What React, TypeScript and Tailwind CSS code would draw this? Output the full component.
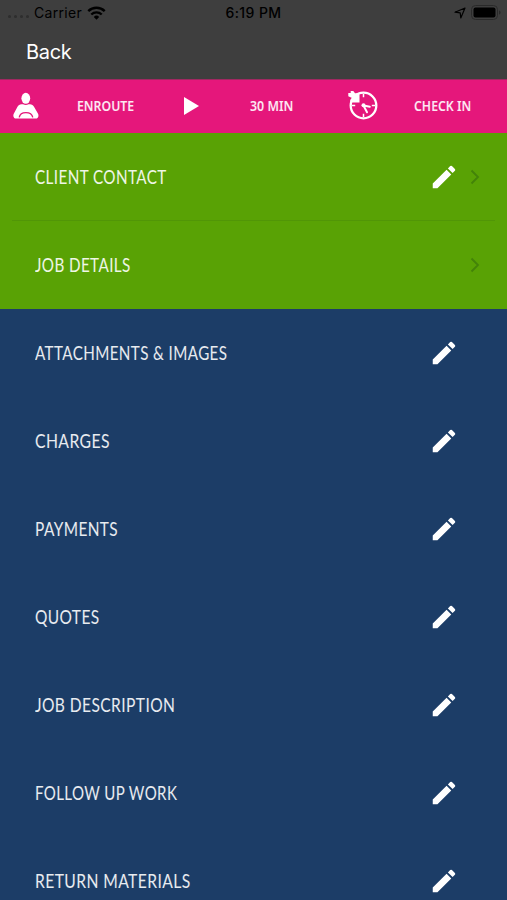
import { MdEdit } from "react-icons/md";

interface MenuItem {
  label: string;
  // horizontal condensing for the label face
  fit: string;
  editable?: boolean;
}

const clientItems: MenuItem[] = [
  { label: "CLIENT CONTACT", fit: "scale-x-[0.802]", editable: true },
  { label: "JOB DETAILS", fit: "scale-x-[0.801]" },
];

const jobItems: MenuItem[] = [
  { label: "ATTACHMENTS & IMAGES", fit: "scale-x-[0.799]" },
  { label: "CHARGES", fit: "scale-x-[0.828]" },
  { label: "PAYMENTS", fit: "scale-x-[0.811]" },
  { label: "QUOTES", fit: "scale-x-[0.814]" },
  { label: "JOB DESCRIPTION", fit: "scale-x-[0.82]" },
  { label: "FOLLOW UP WORK", fit: "scale-x-[0.792]" },
  { label: "RETURN MATERIALS", fit: "scale-x-[0.824]" },
];

function StatusBar() {
  return (
    <div className="grid h-[26px] grid-cols-3 items-center pb-px text-[13.5px] text-black">
      <div className="flex items-center pl-2">
        <div className="mt-2 flex w-[26px] gap-[3px]">
          <span className="size-[3px] rounded-full bg-[#2e2e2e]" />
          <span className="size-[3px] rounded-full bg-[#2e2e2e]" />
          <span className="size-[3px] rounded-full bg-[#2e2e2e]" />
          <span className="size-[3px] rounded-full bg-[#2e2e2e]" />
        </div>
        <span className="text-[14px] tracking-[0.3px]">Carrier</span>
        <svg className="ml-[5px]" width="19" height="14" viewBox="0 0 19 14" fill="none" stroke="#000">
          <path d="M1.3 5.2a11.7 11.7 0 0 1 16.4 0" strokeWidth="2.5" />
          <path d="M4.3 8.5a7.4 7.4 0 0 1 10.4 0" strokeWidth="2.3" />
          <path d="M9.5 13.7l-2.7-2.8a3.8 3.8 0 0 1 5.4 0z" fill="#000" stroke="none" />
        </svg>
      </div>
      <span className="text-center text-[14px] font-medium tracking-[0.4px]">6:19 PM</span>
      <div className="flex items-center justify-end pr-[6px]">
        <svg width="12" height="12" viewBox="0 0 12 12" fill="none" stroke="#000" strokeWidth="1.2" strokeLinejoin="round">
          <path d="M11 1L6.8 11 6.2 5.8 1 5.2z" />
        </svg>
        <svg className="ml-[5px]" width="30" height="15" viewBox="0 0 30 15">
          <rect x="0.5" y="0.5" width="26" height="14" rx="4" fill="none" stroke="#2a2a2a" />
          <rect x="2.5" y="2.5" width="22" height="10" rx="2" fill="#000" />
          <path d="M28 5.5v4c1-.3 1.5-1 1.5-2s-.5-1.7-1.5-2z" fill="#2a2a2a" />
        </svg>
      </div>
    </div>
  );
}

function DriverIcon() {
  return (
    <svg width="26" height="28" viewBox="0 0 26 28" fill="#fff">
      <ellipse cx="12.8" cy="6.3" rx="4.4" ry="5.5" />
      <path d="M8.5 12.3h1.5c1.8 1 3.8 1 5.6 0h1.4c1.8 0 3.2.9 4 2.4l3.9 6.9c1.3 2.5.3 5-2.3 5H3.200C.6 26.600-.4 24.100.9 21.600l3.600-6.900c.8-1.500 2.200-2.400 4-2.400z" />
      <path d="M6.200 25.400c.6-3.400 3.200-4.800 6.700-4.800s6.200 1.400 6.900 4.800" fill="none" stroke="#e5177b" strokeWidth="1.300" />
    </svg>
  );
}

function CheckInIcon() {
  return (
    <svg className="relative -top-px" width="30" height="30" viewBox="0 0 30 30" fill="none" stroke="#fff">
      <circle cx="15.5" cy="15.5" r="12.8" strokeWidth="2.3" />
      <path d="M15.5 4v3.2M15.5 23.8V27M4 15.5h3.2M23.8 15.5H27" strokeWidth="1.5" />
      <path d="M15.5 15.5l6.3 1.2M15.5 15.5l3.5 6.8" strokeWidth="2" strokeLinecap="round" />
      <circle cx="15.5" cy="15.3" r="2" fill="#fff" stroke="none" />
      <path d="M11.5 3.2v9.3H2.3V9.7L4 8 .3 6.2V3h2.4V1h2.6L7 3.2z" fill="#fff" stroke="none" />
    </svg>
  );
}

function ChevronIcon() {
  return (
    <svg width="10" height="16" viewBox="0 0 10 16" fill="none" stroke="#438309" strokeWidth="1.8">
      <path d="M1.5 1.5L8 8l-6.5 6.5" />
    </svg>
  );
}

function MenuRow({ item, chevron }: { item: MenuItem; chevron?: boolean }) {
  return (
    <div className="flex h-[88px] items-center pl-[35px] pr-[27px]">
      <span className={`origin-left whitespace-nowrap pb-px font-['Lato',sans-serif] text-[19px] leading-6 tracking-[0.5px] text-white/90 ${item.fit}`}>
        {item.label}
      </span>
      <div className="ml-auto flex items-center">
        {(item.editable || !chevron) && <MdEdit size={30} color="#fff" />}
        <div className="ml-[11px] w-[10px]">{chevron && <ChevronIcon />}</div>
      </div>
    </div>
  );
}

export default function App() {
  return (
    <div className="h-[900px] w-full overflow-hidden bg-[#1c3d67] font-['Inter',sans-serif]">
      <header className="h-[79px] bg-[#3e3e3e]">
        <StatusBar />
        <button className="ml-[26px] mt-3 block text-[20px] leading-7 tracking-[-0.3px] text-white">Back</button>
      </header>

      {/* Job progress actions */}
      <div className="flex h-[54px] items-center border-t border-[#a12861] bg-[#e5177b] pb-px font-['Noto_Sans',sans-serif] text-[13.5px] font-semibold text-white/90">
        <div className="ml-[13px] w-[26px]"><DriverIcon /></div>
        <div className="ml-[38px] w-[107px]">
          <span className="inline-block origin-left scale-x-[0.91]">ENROUTE</span>
        </div>
        <svg width="15" height="18" viewBox="0 0 15 18" fill="#fff">
          <path d="M0 0l15 9-15 9z" />
        </svg>
        <div className="ml-[51px] w-[98px]">
          <span className="inline-block origin-left scale-x-[0.92]">30 MIN</span>
        </div>
        <CheckInIcon />
        <div className="ml-[36px]">
          <span className="inline-block origin-left scale-x-[0.91] whitespace-nowrap">CHECK IN</span>
        </div>
      </div>

      <section className="bg-[#59a205]">
        <MenuRow item={clientItems[0]} chevron />
        <div className="mx-3 -mt-px h-px bg-[#519607]" />
        <MenuRow item={clientItems[1]} chevron />
      </section>

      <section>
        {jobItems.map((item) => (
          <MenuRow key={item.label} item={item} />
        ))}
      </section>
    </div>
  );
}
